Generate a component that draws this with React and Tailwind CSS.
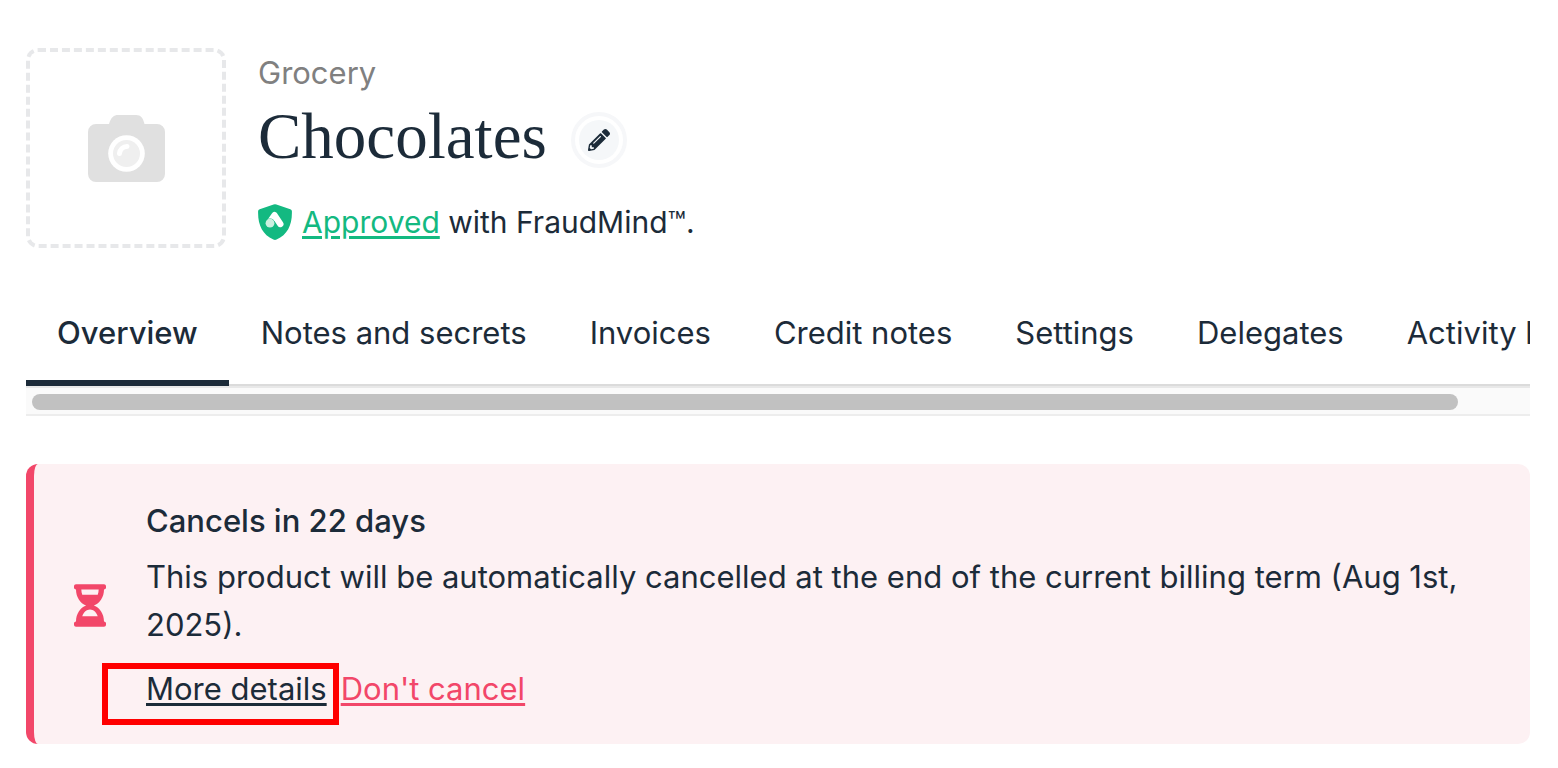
import React, { useState } from 'react';
import { FaHourglassHalf, FaPencilAlt } from 'react-icons/fa';

const TABS = [
  'Overview',
  'Notes and secrets',
  'Invoices',
  'Credit notes',
  'Settings',
  'Delegates',
  'Activity log',
];

const CameraIcon = () => (
  <svg viewBox="0 0 77 67" className="h-[67px] w-[77px]" aria-hidden="true">
    <path
      d="M8 9h13C23 2 26 0 30 0h18c5 0 7 3 8.500 9H69a8 8 0 0 1 8 8v42a8 8 0 0 1-8 8H8a8 8 0 0 1-8-8V17a8 8 0 0 1 8-8Z"
      fill="#e0e0e0"
    />
    <circle cx="38.500" cy="38.500" r="18.300" fill="#fff" />
    <circle cx="38.500" cy="38.500" r="13.500" fill="#efefef" />
    <path d="M31.500 38.500a7.500 7.500 0 0 1 7.500-7" fill="none" stroke="#fff" strokeWidth="5" strokeLinecap="round" />
  </svg>
);

const ShieldIcon = () => (
  <svg viewBox="0 0 34 36" className="h-9 w-[34px] shrink-0" aria-hidden="true">
    <path
      d="M15.600.400a4 4 0 0 1 2.800 0L32.300 5.200a2.300 2.300 0 0 1 1.600 2.300C34.200 21 29.500 30.500 18.600 35.600a4 4 0 0 1-3.200 0C4.500 30.500-.2 21 .1 7.500a2.300 2.300 0 0 1 1.600-2.300Z"
      fill="#13b981"
    />
    <path
      d="M12.500 17 16.500 11.200l5.800 8.800"
      fill="none"
      stroke="#fff"
      strokeWidth="6.400"
      strokeLinecap="round"
      strokeLinejoin="round"
    />
    <circle cx="12" cy="19.200" r="4.800" fill="#13b981" />
    <circle cx="12" cy="19.200" r="4.400" fill="#cbf0e0" />
  </svg>
);

const ProductHeader = () => (
  <header className="flex gap-8">
    <div className="flex size-[200px] shrink-0 items-center justify-center rounded-xl border-4 border-dashed border-[#e7e8ea]">
      <CameraIcon />
    </div>
    <div>
      <p className="text-[31px] leading-[50px] text-[#808080]">Grocery</p>
      <div className="mt-1 flex items-center gap-6">
        <h1 className="pb-2 font-['Liberation_Serif',serif] text-[65px] leading-[68px]">Chocolates</h1>
        <button
          type="button"
          aria-label="Edit name"
          className="flex size-14 items-center justify-center rounded-full border-4 border-[#f6f7f9] p-1"
        >
          <span className="flex size-10 items-center justify-center rounded-full bg-[#f5f7f9]">
            <FaPencilAlt className="size-[22px]" />
          </span>
        </button>
      </div>
      <div className="mt-6 flex items-center gap-2.5">
        <ShieldIcon />
        <p className="text-[30px] leading-10">
          <a href="#fraudmind" className="text-[#13b981] underline decoration-[3px] underline-offset-3">
            Approved
          </a>{' '}
          with FraudMind™.
        </p>
      </div>
    </div>
  </header>
);

const ProductTabs = () => {
  const [active, setActive] = useState('Overview');

  return (
    <div className="mt-8">
      <nav className="flex gap-px overflow-hidden shadow-[inset_0_-2px_0_#dbdbdb]">
        {TABS.map((tab) => (
          <button
            key={tab}
            type="button"
            onClick={() => setActive(tab)}
            className={`shrink-0 border-b-6 px-[31px] pt-[30px] pb-6 text-[31px] leading-[46px] ${
              tab === active ? 'border-[#1c2b39] font-medium' : 'border-transparent'
            }`}
          >
            {tab}
          </button>
        ))}
      </nav>
      {/* scrollbar track */}
      <div className="border-t-2 border-b-2 border-t-[#e8e8e8] border-b-[#ededed] bg-[#fafafa] px-1.5 pt-1.5 pb-1">
        <div className="h-4 w-[95.600%] rounded-full bg-[#c1c1c1]" />
      </div>
    </div>
  );
};

const CancelNotice = () => (
  <section className="mt-12 flex items-center gap-10 rounded-xl border-l-8 border-[#f24769] bg-[#fdf1f3] px-10 pt-[33px] pb-[31px]">
    <FaHourglassHalf className="h-[43px] w-8 shrink-0 text-[#f24769]" />
    <div className="text-[31px] leading-[48px]">
      <h2 className="font-medium">Cancels in 22 days</h2>
      <p className="mt-2">
        This product will be automatically cancelled at the end of the current billing term (Aug 1st, 2025).
      </p>
      <div className="mt-4 flex gap-3.5">
        <a href="#details" className="relative underline decoration-[3px] underline-offset-3">
          More details
          <span className="absolute -top-0.5 -right-3 -bottom-3 -left-11 border-6 border-[#ff0000]" />
        </a>
        <a href="#keep" className="text-[#f24769] underline decoration-[3px] underline-offset-3">
          Don't cancel
        </a>
      </div>
    </div>
  </section>
);

export default function App() {
  return (
    <main className="min-h-screen bg-white pt-12 pr-7 pb-6 pl-[26px] font-['Inter',sans-serif] text-[#1c2b39]">
      <ProductHeader />
      <ProductTabs />
      <CancelNotice />
    </main>
  );
}
